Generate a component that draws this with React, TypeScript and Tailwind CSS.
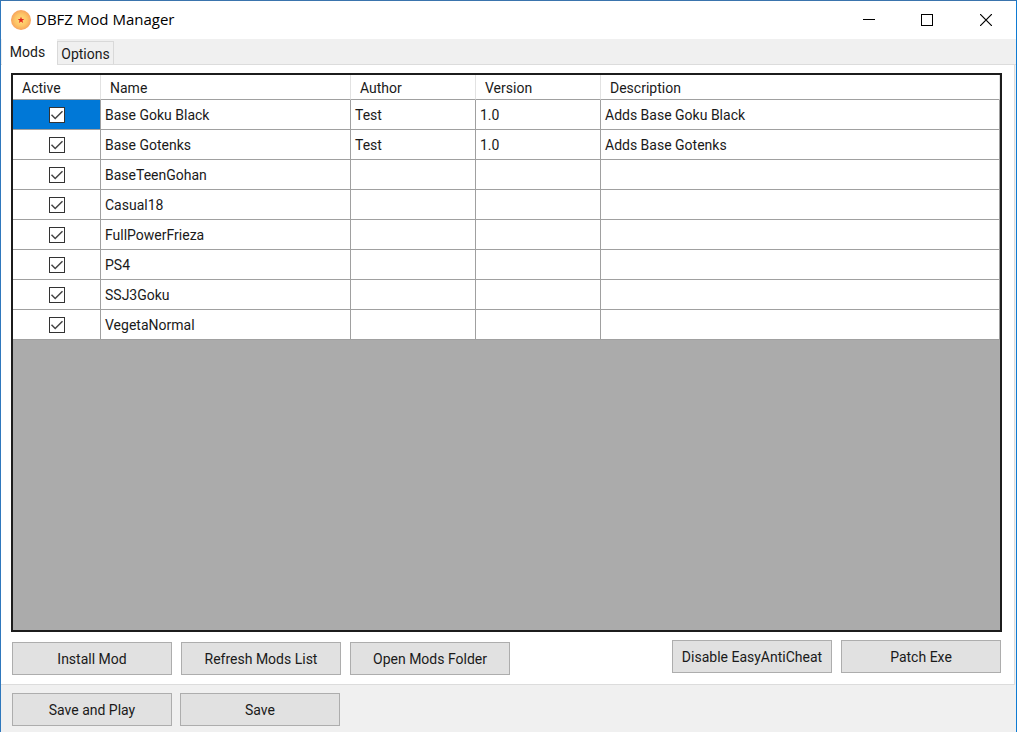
import { useState } from "react";

type Mod = {
  name: string;
  author?: string;
  version?: string;
  description?: string;
};

const MODS: Mod[] = [
  { name: "Base Goku Black", author: "Test", version: "1.0", description: "Adds Base Goku Black" },
  { name: "Base Gotenks", author: "Test", version: "1.0", description: "Adds Base Gotenks" },
  { name: "BaseTeenGohan" },
  { name: "Casual18" },
  { name: "FullPowerFrieza" },
  { name: "PS4" },
  { name: "SSJ3Goku" },
  { name: "VegetaNormal" },
];

function AppIcon() {
  return (
    <svg className="size-5" viewBox="0 0 20 20" aria-hidden="true">
      <defs>
        <radialGradient id="ball">
          <stop offset="0" stopColor="#ffdf80" />
          <stop offset="0.6" stopColor="#fdc566" />
          <stop offset="1" stopColor="#f7a35c" />
        </radialGradient>
      </defs>
      <circle cx="10" cy="10" r="10" fill="url(#ball)" />
      <path
        d="M10 6.800l.9 2.200 2.400.1-1.900 1.500.7 2.300-2.100-1.300-2.100 1.300.7-2.300L6.700 9.100l2.400-.1z"
        fill="#e3241b"
      />
    </svg>
  );
}

function TitleBar() {
  return (
    <header className="flex h-[38px] shrink-0 items-center bg-white pl-[10px]">
      <AppIcon />
      <h1 className="ml-[5px] flex-1 pb-[2px] font-['Open_Sans','Noto_Sans',sans-serif] text-[15px] leading-5 text-black">
        DBFZ Mod Manager
      </h1>
      <button type="button" aria-label="Minimize" className="flex h-full w-[58px] items-center justify-center">
        <svg className="h-3 w-3" viewBox="0 0 12 12" shapeRendering="crispEdges">
          <path d="M0 5.500h12" stroke="#000" />
        </svg>
      </button>
      <button type="button" aria-label="Maximize" className="flex h-full w-[58px] items-center justify-center">
        <svg className="h-3 w-3" viewBox="0 0 12 12" shapeRendering="crispEdges">
          <path d="M.5.5h11v11H.5z" fill="none" stroke="#000" />
        </svg>
      </button>
      <button type="button" aria-label="Close" className="flex h-full w-[60px] items-center justify-center">
        <svg className="h-3 w-3" viewBox="0 0 12 12">
          <path d="M0 0l12 12M12 0L0 12" fill="none" stroke="#000" strokeWidth="1.200" />
        </svg>
      </button>
    </header>
  );
}

function ActiveBox({ label }: { label: string }) {
  const [on, setOn] = useState(true);
  return (
    <span className="mx-auto grid size-4">
      <input
        type="checkbox"
        aria-label={label}
        checked={on}
        onChange={() => setOn(!on)}
        className="peer col-start-1 row-start-1 size-4 appearance-none border border-[#333] bg-white"
      />
      <svg
        className="pointer-events-none invisible col-start-1 row-start-1 size-4 peer-checked:visible"
        viewBox="0 0 16 16"
        aria-hidden="true"
      >
        <path d="M2.500 7.800l3.700 3.700L13.500 4.200" fill="none" stroke="#444" strokeWidth="1.500" />
      </svg>
    </span>
  );
}

function PushButton({ children }: { children: string }) {
  return (
    <button
      type="button"
      className="h-[33px] w-40 border border-[#adadad] bg-[#e1e1e1] text-center"
    >
      {children}
    </button>
  );
}

const HEAD = "border-r border-b border-r-[#e2e2e2] border-b-[#a0a0a0] pt-px pl-[9px] text-left font-normal";
const CELL = "border-r border-b border-[#a0a0a0] px-1";

function ModTable() {
  return (
    <table className="w-full table-fixed border-separate border-spacing-0 bg-white">
      <colgroup>
        <col className="w-[88px]" />
        <col className="w-[250px]" />
        <col className="w-[125px]" />
        <col className="w-[125px]" />
        <col />
      </colgroup>
      <thead>
        <tr className="h-[25px]">
          <th className={HEAD}>Active</th>
          <th className={HEAD}>Name</th>
          <th className={HEAD}>Author</th>
          <th className={HEAD}>Version</th>
          <th className={HEAD}>Description</th>
        </tr>
      </thead>
      <tbody>
        {MODS.map((mod, i) => (
          <tr key={mod.name} className="h-[30px]">
            <td className={i === 0 ? `${CELL} bg-[#0078d7]` : CELL}>
              <ActiveBox label={`${mod.name} active`} />
            </td>
            <td className={CELL}>{mod.name}</td>
            <td className={CELL}>{mod.author}</td>
            <td className={CELL}>{mod.version}</td>
            <td className={CELL}>{mod.description}</td>
          </tr>
        ))}
      </tbody>
    </table>
  );
}

export default function App() {
  return (
    <div className="flex min-h-screen flex-col border-x border-t border-t-[#3a74ad] border-l-[#2f78bd] border-r-[#0f7bd3] bg-[#f0f0f0] font-[Roboto,'Liberation_Sans',sans-serif] text-[14px] leading-4 text-[#1a1a1a]">
      <TitleBar />
      <nav role="tablist" className="flex h-[26px] shrink-0 items-end border-b border-[#dcdcdc] pl-px">
        <button
          type="button"
          role="tab"
          aria-selected="true"
          className="-mb-px h-[26px] w-[55px] bg-white pr-1 text-center"
        >
          Mods
        </button>
        <button
          type="button"
          role="tab"
          aria-selected="false"
          className="h-[23px] w-[57px] border border-b-0 border-[#d9d9d9] bg-[#f0f0f0] pt-px text-center"
        >
          Options
        </button>
      </nav>
      <main className="mr-px flex flex-1 flex-col border-r border-b border-[#dcdcdc] bg-white pt-2 pr-3 pb-[9px] pl-[10px]">
        <div className="flex-1 border-2 border-[#1c1c1c] bg-[#ababab]">
          <ModTable />
        </div>
        <div className="flex items-start justify-between px-px pt-2">
          <div className="flex gap-[9px] pt-[2px]">
            <PushButton>Install Mod</PushButton>
            <PushButton>Refresh Mods List</PushButton>
            <PushButton>Open Mods Folder</PushButton>
          </div>
          <div className="flex gap-[9px]">
            <PushButton>Disable EasyAntiCheat</PushButton>
            <PushButton>Patch Exe</PushButton>
          </div>
        </div>
      </main>
      <footer className="flex gap-2 pt-2 pb-[6px] pl-[11px]">
        <PushButton>Save and Play</PushButton>
        <PushButton>Save</PushButton>
      </footer>
    </div>
  );
}
